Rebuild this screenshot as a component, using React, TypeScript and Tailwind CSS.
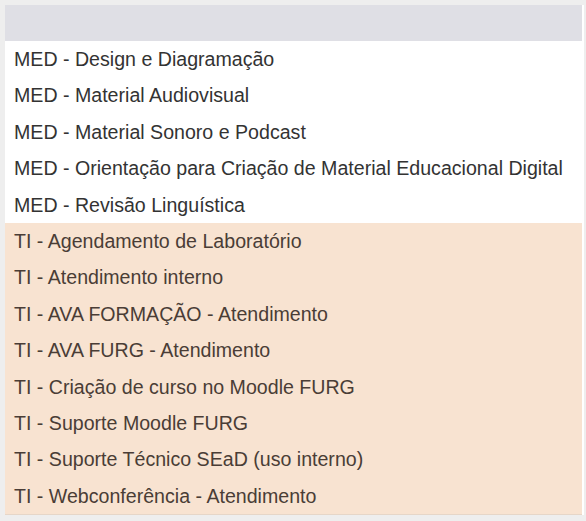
import React from 'react';

type Option = { label: string; group: 'med' | 'ti' };

const options: Option[] = [
  { label: 'MED - Design e Diagramação', group: 'med' },
  { label: 'MED - Material Audiovisual', group: 'med' },
  { label: 'MED - Material Sonoro e Podcast', group: 'med' },
  { label: 'MED - Orientação para Criação de Material Educacional Digital', group: 'med' },
  { label: 'MED - Revisão Linguística', group: 'med' },
  { label: 'TI - Agendamento de Laboratório', group: 'ti' },
  { label: 'TI - Atendimento interno', group: 'ti' },
  { label: 'TI - AVA FORMAÇÃO - Atendimento', group: 'ti' },
  { label: 'TI - AVA FURG - Atendimento', group: 'ti' },
  { label: 'TI - Criação de curso no Moodle FURG', group: 'ti' },
  { label: 'TI - Suporte Moodle FURG', group: 'ti' },
  { label: 'TI - Suporte Técnico SEaD (uso interno)', group: 'ti' },
  { label: 'TI - Webconferência - Atendimento', group: 'ti' },
];

const App: React.FC = () => {
  return (
    <div className="w-[586px] h-[521px] bg-[#eeeeee] pt-[5px] pl-[5px] font-['Liberation_Sans']">
      <div className="flex w-[579px]">
        <div className="w-[577px] flex flex-col">
          {/* empty placeholder option */}
          <div className="h-[36px] bg-[#dfdfe5]" />
          {options.map(o => (
            <div
              key={o.label}
              className={`h-[36.4px] flex items-center pl-[9px] pt-[1px] text-[19.6px] whitespace-nowrap ${
                o.group === 'med' ? 'bg-white text-[#333333]' : 'bg-[#f8e3d1] text-[#4a3d36]'
              }`}
            >
              {o.label}
            </div>
          ))}
          <div className="h-[1px] bg-[#e6d6c8]" />
        </div>
        <div className="w-[2px] bg-white" />
      </div>
    </div>
  );
};

export default App;
